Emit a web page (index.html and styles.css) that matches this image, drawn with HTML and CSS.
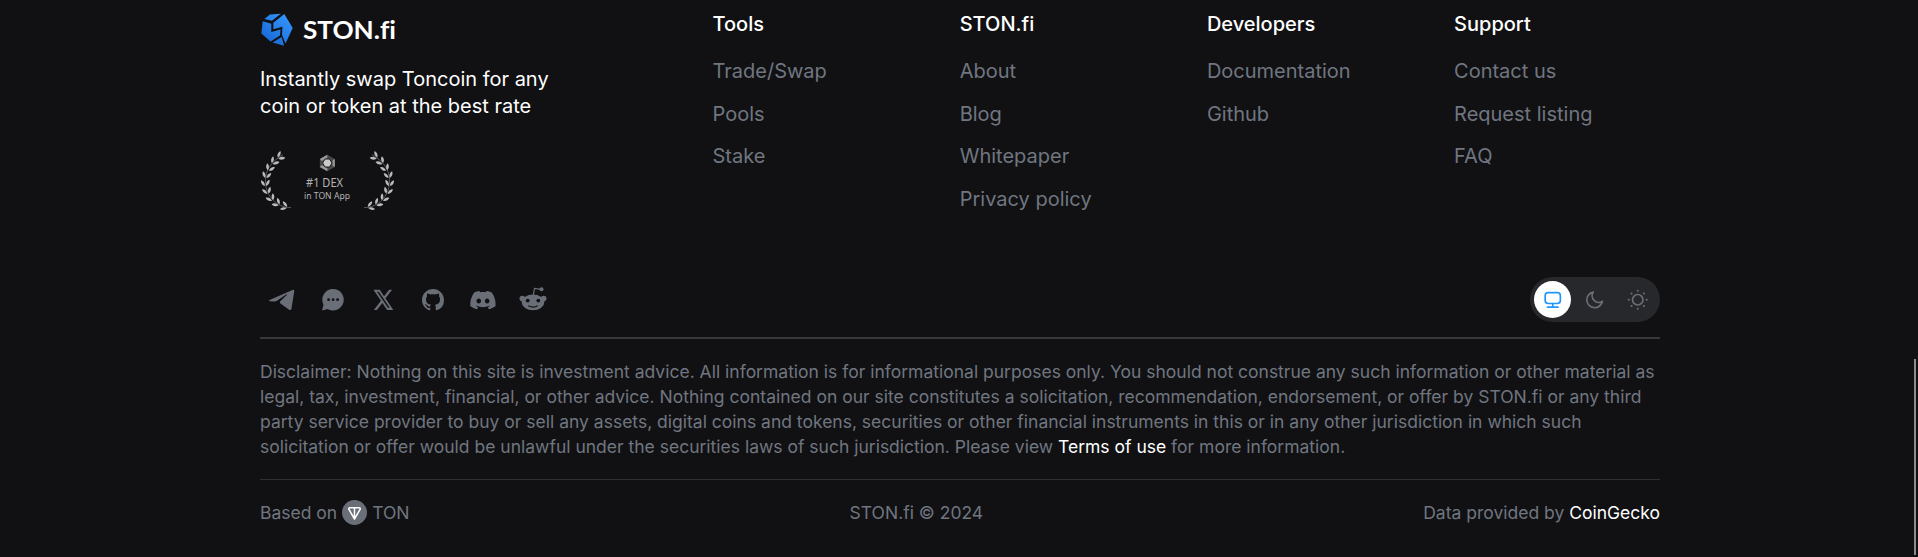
FILE: index.html
```html
<!DOCTYPE html>
<html lang="en">
<head>
<meta charset="utf-8">
<title>STON.fi</title>
<link rel="stylesheet" href="styles.css">
</head>
<body>
<footer class="footer">
  <div class="top">
    <div class="brand">
      <svg class="logo" width="140" height="37" viewBox="0 0 140 37">
        <defs><linearGradient id="stone" gradientUnits="userSpaceOnUse" x1="28" y1="6" x2="6" y2="32"><stop offset="0" stop-color="#3595ff"/><stop offset="1" stop-color="#1668d4"/></linearGradient></defs>
        <g fill="url(#stone)">
          <path d="M4.300 9 10 4.600 20.800 3.700 12 10.800z"/>
          <path d="M2.700 11.200 11.300 13.700V22L20.500 19.500 20 25.500 10.500 31.500 1.300 23.500z"/>
          <path d="M24.300 4 32.700 18 25.500 33.500 22 25 22.400 16.800 13.300 19.300V12.700z"/>
          <path d="M12.700 32.500 21.700 27 24 35.700z"/>
        </g>
        <text class="logo-text" x="43" y="29" textLength="93" lengthAdjust="spacingAndGlyphs">STON.fi</text>
      </svg>
      <p class="tagline">Instantly swap Toncoin for any<br>coin or token at the best rate</p>
      <svg class="award" width="140" height="62" viewBox="0 0 140 62">
        <defs>
          <g id="pair">
            <path d="M0-.6C1-3.400 3-4.600 6-4.300 5.400-1.800 3-.2 0-.6zM0 .6C1 3.400 3 4.600 6 4.300 5.400 1.800 3 .2 0 .6z"/>
          </g>
          <g id="laurel" fill="#bababa">
            <path fill="none" stroke="#777" stroke-width=".7" d="M23 4.500C11 12 5 20 5.500 32 6 46 16 57.500 31 57.600"/>
            <use href="#pair" transform="translate(18 8) rotate(-35)"/>
            <use href="#pair" transform="translate(12.300 13.500) rotate(-48)"/>
            <use href="#pair" transform="translate(8.300 20.500) rotate(-62)"/>
            <use href="#pair" transform="translate(5.800 28) rotate(-78)"/>
            <use href="#pair" transform="translate(5.500 36) rotate(-92)"/>
            <use href="#pair" transform="translate(8 43.700) rotate(-108)"/>
            <use href="#pair" transform="translate(12.500 50.500) rotate(-122)"/>
            <use href="#pair" transform="translate(19 55) rotate(-138)"/>
            <use href="#pair" transform="translate(27 57.300) rotate(-160)"/>
          </g>
        </defs>
        <use href="#laurel"/>
        <use href="#laurel" transform="translate(135 0) scale(-1 1)"/>
        <path fill="#484848" d="M67.300 4.800 74.800 9V17L67.300 21.200 59.800 17V9z"/>
        <path fill="#999" d="M67.300 4.800 59.800 9 62 11 67.300 8zM74.800 9V17L72.500 15.500V10.500zM67.300 21.200 59.800 17 62 15 67.300 18z"/>
        <path fill="#c8c8c8" stroke="#111113" stroke-width=".9" d="M65 9H69.600L72 13 69.600 17H65L62.600 13z"/>
        <text class="award-title" x="46" y="36.500" textLength="37" lengthAdjust="spacingAndGlyphs">#1 DEX</text>
        <text class="award-sub" x="44" y="49" textLength="46" lengthAdjust="spacingAndGlyphs">in TON App</text>
      </svg>
    </div>
    <nav class="col"><h4>Tools</h4><a>Trade/Swap</a><a>Pools</a><a>Stake</a></nav>
    <nav class="col"><h4>STON.fi</h4><a>About</a><a>Blog</a><a>Whitepaper</a><a>Privacy policy</a></nav>
    <nav class="col"><h4>Developers</h4><a>Documentation</a><a>Github</a></nav>
    <nav class="col"><h4>Support</h4><a>Contact us</a><a>Request listing</a><a>FAQ</a></nav>
  </div>

  <div class="actions">
    <div class="socials">
      <svg viewBox="0 0 45 45"><path d="M9 23.300 32.500 13Q34.600 12.200 34.200 14.500L31.500 31.500Q31 34 28.800 32.500L20.200 26.300Q19.300 25.300 20.300 24.300L27 17.800Q27.500 16.800 26.200 17.500L17 23.800Q15.500 24.600 13.800 24.400L9.500 24.200z"/></svg>
      <svg viewBox="0 0 45 45"><path fill-rule="evenodd" d="M23 11.900a10.800 10.800 0 1 1-5.500 20.100L12.600 33.400Q12 33.400 12.300 32.600L13.500 27.700A10.800 10.800 0 0 1 23 11.900zM18.600 21.300a1.400 1.400 0 1 0 0 2.800 1.400 1.400 0 0 0 0-2.800zm4.500 0a1.400 1.400 0 1 0 0 2.800 1.400 1.400 0 0 0 0-2.800zm4.500 0a1.400 1.400 0 1 0 0 2.800 1.400 1.400 0 0 0 0-2.800z"/></svg>
      <svg viewBox="0 0 45 45"><path transform="translate(12.300 10.500) scale(.92 1.030)" d="M18.244 2.250h3.308l-7.227 8.260 8.502 11.240H16.170l-5.214-6.817L4.990 21.750H1.680l7.730-8.835L1.254 2.250H8.080l4.713 6.231zm-1.161 17.520h1.833L7.084 4.126H5.117z"/></svg>
      <svg viewBox="0 0 45 45"><path transform="translate(12 11.900) scale(1.375)" d="M8 0C3.580 0 0 3.580 0 8c0 3.540 2.290 6.530 5.470 7.590.4.070.55-.17.55-.38 0-.19-.01-.82-.01-1.490-2.010.37-2.530-.49-2.690-.94-.09-.23-.48-.94-.82-1.130-.28-.15-.68-.52-.01-.53.63-.01 1.080.58 1.230.82.72 1.210 1.870.87 2.330.66.07-.52.28-.87.51-1.070-1.780-.2-3.640-.89-3.640-3.950 0-.87.31-1.590.82-2.150-.08-.2-.36-1.020.08-2.120 0 0 .67-.21 2.200.82.64-.18 1.320-.27 2-.27s1.360.09 2 .27c1.530-1.040 2.200-.82 2.200-.82.44 1.100.16 1.920.08 2.120.51.56.82 1.270.82 2.150 0 3.070-1.870 3.750-3.650 3.950.29.25.54.73.54 1.480 0 1.070-.01 1.930-.01 2.200 0 .21.15.46.55.38A8.010 8.010 0 0 0 16 8c0-4.420-3.580-8-8-8z"/></svg>
      <svg viewBox="0 0 45 45"><path transform="translate(10.300 11.100) scale(1.055 1)" d="M20.317 4.370a19.790 19.790 0 0 0-4.885-1.515.074.074 0 0 0-.079.037c-.211.375-.445.865-.608 1.250-1.845-.276-3.680-.276-5.487 0-.164-.393-.406-.874-.618-1.250a.077.077 0 0 0-.079-.037 19.740 19.740 0 0 0-4.885 1.515.07.07 0 0 0-.032.028C.533 9.046-.319 13.580.099 18.058a.082.082 0 0 0 .031.056c2.053 1.508 4.041 2.423 5.993 3.029a.078.078 0 0 0 .084-.028c.462-.63.873-1.295 1.226-1.994a.076.076 0 0 0-.042-.106c-.653-.248-1.274-.55-1.872-.892a.077.077 0 0 1-.008-.128c.126-.094.252-.192.372-.291a.074.074 0 0 1 .078-.011c3.928 1.793 8.180 1.793 12.061 0a.074.074 0 0 1 .079.010c.12.099.246.198.373.292a.077.077 0 0 1-.007.128c-.598.350-1.220.645-1.873.891a.077.077 0 0 0-.041.107c.360.698.772 1.363 1.225 1.993a.076.076 0 0 0 .084.029c1.961-.607 3.950-1.522 6.002-3.029a.077.077 0 0 0 .031-.055c.5-5.177-.838-9.674-3.549-13.660a.061.061 0 0 0-.031-.029zM8.020 15.331c-1.183 0-2.157-1.086-2.157-2.419s.956-2.419 2.157-2.419c1.211 0 2.176 1.095 2.157 2.419 0 1.333-.956 2.419-2.157 2.419zm7.975 0c-1.183 0-2.157-1.086-2.157-2.419s.955-2.419 2.157-2.419c1.211 0 2.176 1.095 2.157 2.419 0 1.333-.946 2.419-2.157 2.419z"/></svg>
      <svg viewBox="0 0 45 45"><circle cx="12.300" cy="21.600" r="2.800"/><circle cx="33.700" cy="21.600" r="2.800"/><ellipse cx="23" cy="25.300" rx="11.200" ry="7.900"/><circle cx="31.500" cy="12.300" r="2"/><path class="line" d="M23.300 18 24.500 11.400 31 12.300"/><circle class="hole" cx="17.700" cy="23.600" r="1.900"/><circle class="hole" cx="28.300" cy="23.600" r="1.900"/><path class="smile" d="M18.300 28.800Q23 31.300 27.700 28.800"/></svg>
    </div>
    <div class="themes">
      <span class="theme active"><svg viewBox="0 0 38 38"><rect x="11.300" y="11.800" width="15.400" height="11" rx="3"/><path d="M19 22.800V26.300M13.700 26.500H24.300"/></svg></span>
      <span class="theme"><svg viewBox="0 0 38 38"><path d="M17.500 11.200A8 8 0 1 0 26.800 20.500 6.700 6.700 0 0 1 17.500 11.200z"/></svg></span>
      <span class="theme"><svg viewBox="0 0 38 38"><circle cx="19" cy="19" r="5.300"/><path class="rays" d="M19 9.900v.1M19 28v.1M9.900 19h.1M28 19h.1M12.700 12.700h.1M25.200 25.300h.1M12.700 25.300h.1M25.200 12.700h.1"/></svg></span>
    </div>
  </div>

  <p class="disclaimer">Disclaimer: Nothing on this site is investment advice. All information is for informational purposes only. You should not construe any such information or other material as<br>legal, tax, investment, financial, or other advice. Nothing contained on our site constitutes a solicitation, recommendation, endorsement, or offer by STON.fi or any third<br>party service provider to buy or sell any assets, digital coins and tokens, securities or other financial instruments in this or in any other jurisdiction in which such<br>solicitation or offer would be unlawful under the securities laws of such jurisdiction. Please view <a>Terms of use</a> for more information.</p>

  <div class="bottom">
    <span class="based">Based on <svg width="25" height="25" viewBox="0 0 25 25"><circle cx="12.500" cy="12.500" r="12.500" fill="#6a6e77"/><path fill="none" stroke="#fff" stroke-width="1.500" stroke-linejoin="round" d="M7.600 7.700H17.400Q18.600 8 18.100 9.400L12.500 19 6.900 9.400Q6.400 8 7.600 7.700zM12.500 7.700V18.500"/></svg> TON</span>
    <span class="copy">STON.fi © 2024</span>
    <span class="data">Data provided by <a>CoinGecko</a></span>
  </div>
</footer>
<div class="scrollbar"></div>
</body>
</html>
```
FILE: styles.css
```css
body {
  margin: 0;
  background: #111113;
  color: #fff;
  font-family: Inter, sans-serif;
  font-size: 20px;
  line-height: 27.5px;
}
svg { display: block; }

.footer {
  width: 1400px;
  margin-left: 260px;
  padding-top: 10px;
}
.top {
  display: grid;
  grid-template-columns: 412.5px repeat(4, 207.2px);
  column-gap: 40px;
  height: 267px;
}
.brand { display: flex; flex-direction: column; }
.logo-text { font: 700 24px Lato, sans-serif; font-variant-ligatures: none; fill: #fff; }
.tagline { margin: 18.6px 0 29.4px; }
.award-title { font: 12.5px "Noto Sans", sans-serif; fill: #b4b4b4; }
.award-sub { font: 9.5px "Noto Sans", sans-serif; fill: #b4b4b4; }
.col {
  display: flex;
  flex-direction: column;
  gap: 15px;
  padding-top: 0.6px;
  color: #707680;
}
.col h4 { margin: 0 0 5px; font-size: 20px; font-weight: 500; }
.col h4, .disclaimer a, .data a { color: #fff; }

.actions {
  display: flex;
  justify-content: space-between;
  height: 45px;
  padding-bottom: 15px;
  border-bottom: 2px solid #38383b;
}
.socials { display: flex; gap: 5px; fill: #6a6e77; }
.socials svg { width: 45px; height: 45px; }
.socials .line { fill: none; stroke: #6a6e77; stroke-width: 1.2; }
.socials .hole { fill: #111113; }
.socials .smile { fill: none; stroke: #111113; stroke-width: 1.2; }

.themes {
  display: flex;
  align-items: center;
  gap: 5px;
  padding: 0 3.75px;
  border-radius: 23px;
  background: #27282b;
}
.theme { width: 37.5px; height: 37.5px; border-radius: 50%; }
.theme svg {
  width: 37.5px;
  height: 37.5px;
  fill: none;
  stroke: #6a6e77;
  stroke-width: 1.7;
  stroke-linecap: round;
  stroke-linejoin: round;
}
.theme .rays { stroke-width: 2; }
.active { background: #fff; }
.active svg { stroke: #1d98ff; }

.disclaimer {
  margin: 0;
  padding: 20px 0;
  border-bottom: 1px solid #2f3033;
  font-size: 17.5px;
  line-height: 25px;
  color: #707680;
  white-space: nowrap;
}
.bottom {
  display: flex;
  justify-content: space-between;
  align-items: center;
  padding-top: 20px;
  font-size: 17.5px;
  line-height: 25px;
  color: #707680;
}
.based { display: flex; gap: 5px; }

.scrollbar {
  position: absolute;
  left: 1914px;
  top: 359px;
  width: 2px;
  height: 196px;
  background: #8b8b8b;
}
```
